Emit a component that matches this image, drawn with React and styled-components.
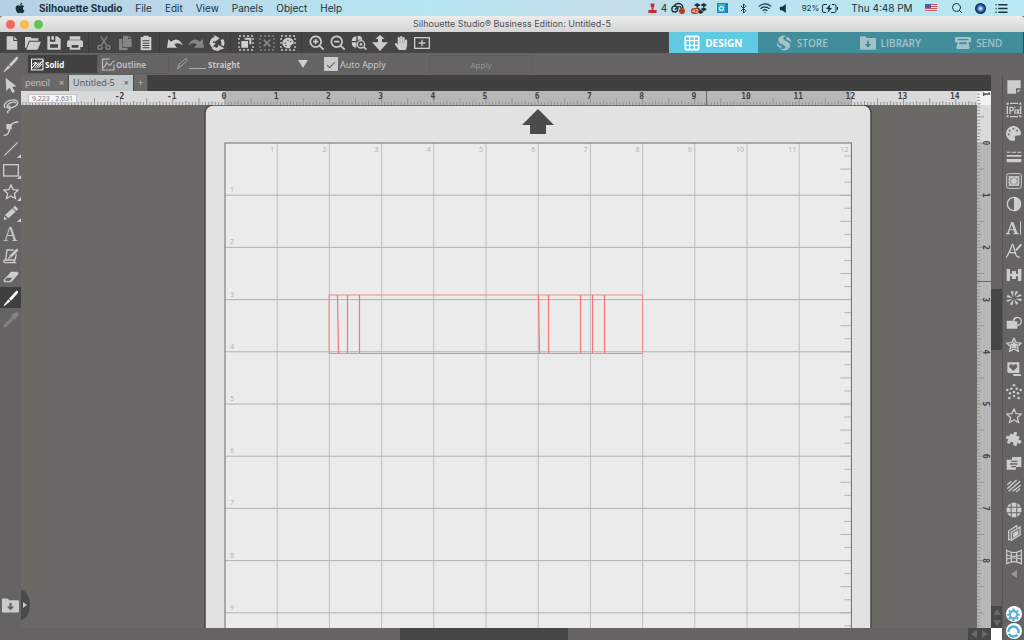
import React, { useState } from "react";
import styled, { createGlobalStyle, css } from "styled-components";
import { Bluetooth, Search, Wifi } from "lucide-react";
import { FaApple, FaDropbox, FaHandPaper, FaPalette } from "react-icons/fa";

const GlobalStyle = createGlobalStyle`
  *, *::before, *::after {
    box-sizing: border-box;
  }

  body {
    margin: 0;
    overflow: hidden;
    font-family: "Open Sans", "Noto Sans", sans-serif;
    font-size: 9px;
  }

  button, input, select {
    margin: 0;
    padding: 0;
    border: 0;
    border-radius: 0;
    background: none;
    color: inherit;
    font: inherit;
  }
`;

/* ---------- icons, all on a 24 x 24 box ---------- */

const STAR = "M12 1.5l3.200 6.900 7.600.8-5.700 5.100 1.600 7.500-6.700-3.800-6.700 3.800 1.600-7.500-5.700-5.100 7.600-.8z";
const MARQUEE = <rect x="1.5" y="1.5" width="21" height="21" fill="none" strokeWidth="2" strokeDasharray="3 3" />;
const ARROW_FOLDER = (
  <path
    stroke="none"
    fillRule="evenodd"
    d="M0 3.5Q0 2 1.500 2H8l2 2.500h12.500q1.500 0 1.500 1.500v14.500q0 1.500-1.500 1.500h-21Q0 22 0 20.500zM10.500 8.500v5H7l5 5.500 5-5.500h-3.500v-5z"
  />
);

const ICONS = {
  page: <path stroke="none" d="M4 2h10v7h6v13H4zM15.500 2l4.500 5.500h-4.500z" />,
  open: <path stroke="none" d="M0 3h8l2 2h10v3.500H6L2 19H0zM7 10h17l-5 12H2z" />,
  save: <path stroke="none" fillRule="evenodd" d="M2 2h4v8h8V2h3l5 4v16H2zM8 2h4v5H8zM6 14v5h12v-5z" />,
  print: <path stroke="none" fillRule="evenodd" d="M4 2h16v5H4zM3 8h18q3 0 3 3v7h-4v4H4v-4H0v-7q0-3 3-3zM7 15v4h10v-4z" />,
  cut: (
    <g fill="none" strokeWidth="2">
      <circle cx="6" cy="18.500" r="3" />
      <circle cx="18" cy="18.500" r="3" />
      <path d="M7.500 16L17 2M16.500 16L7 2" />
    </g>
  ),
  copy: <path stroke="none" fillRule="evenodd" d="M3 6h5v13h8v4H3zM9 1h8v5h5v12H9zM18 1l4 4h-4z" />,
  paste: (
    <path
      stroke="none"
      fillRule="evenodd"
      d="M4 3h4V1h8v2h4v20H4zM7 8v1.500h10V8zM7 11.500V13h10v-1.500zM7 15v1.500h10V15zM7 18.500V20h10v-1.500z"
    />
  ),
  undo: <path stroke="none" d="M0 19L2 6l4 4Q17 1 24 16q-7-6-13-2l4 5z" />,
  redo: <path stroke="none" d="M24 19L22 6l-4 4Q7 1 0 16q7-6 13-2l-4 5z" />,
  refresh: (
    <>
      <path fill="none" strokeWidth="4.500" d="M3.500 13a8.500 8.500 0 0 1 5-8M19 7a8.500 8.500 0 0 1 1 9M15 20.500a8.500 8.500 0 0 1-9-1.500" />
      <path stroke="none" d="M8 0l8 5-8 6zM12 24l2-9 9 5zM0 12h10l-5 8z" />
    </>
  ),
  selectAll: (
    <>
      {MARQUEE}
      <path stroke="none" d="M10 4h10v10h-3V7h-7zM5 9h10v10H5z" />
    </>
  ),
  deselect: (
    <>
      {MARQUEE}
      <path strokeWidth="2.500" d="M7 7l10 10M17 7L7 17" />
    </>
  ),
  selectColor: (
    <>
      {MARQUEE}
      <path stroke="none" fillRule="evenodd" d="M12 4c6 0 9 4 8.500 8-.5 3-3 2-4 3s0 5-4 5c-5 0-9-4-9-8s4-8 8.500-8zM7 11v2h2v-2zM11 7v2h2V7zM15 9v2h2V9zM8 15v2h2v-2z" />
    </>
  ),
  zoomIn: <path fill="none" strokeWidth="2.500" d="M10 2a8 8 0 1 0 .1 0zM16 16l6 6M10 6v8M6 10h8" />,
  zoomOut: <path fill="none" strokeWidth="2.500" d="M10 2a8 8 0 1 0 .1 0zM16 16l6 6M6 10h8" />,
  zoomSelection: (
    <>
      <path stroke="none" d="M1 9Q1 3 8 2v7zM10 1q7 0 7 6H10zM1 11h7v8Q1 19 1 11z" />
      <circle cx="15" cy="14" r="5.500" fill="none" strokeWidth="2" />
      <circle cx="15" cy="14" r="2" stroke="none" />
      <path strokeWidth="2.500" d="M19 18l4 4" />
    </>
  ),
  zoomDrag: <path stroke="none" d="M12 0l7 6h-4v5h9L12 24 0 11h9V6H5z" />,
  fit: (
    <g fill="none" strokeWidth="2">
      <rect x="1" y="4" width="22" height="16" />
      <path d="M12 7v10M7 12h10" />
    </g>
  ),
  design: (
    <g fill="none" strokeWidth="2.500">
      <rect x="2" y="2" width="20" height="20" rx="1" />
      <path d="M8.500 2v20M15.500 2v20M2 8.500h20M2 15.500h20" strokeWidth="2" />
    </g>
  ),
  store: (
    <path
      stroke="none"
      d="M4 4Q10-1 16 2q-6 1-5 4 1 2 6 4 6 3 4 8-2 4-7 5-6 1-10-3 6 2 9 0 3-3-2-5Q1 11 4 4zM18 3q5 3 5 9-2-4-7-5-3-2 2-4zM1 11q2 4 7 6 2 2-1 2-3 0-5-3-1-2-1-5z"
    />
  ),
  library: ARROW_FOLDER,
  send: (
    <path
      stroke="none"
      fillRule="evenodd"
      d="M2 3h20q2 0 2 2v5q0 1-2 1h-2l2 8q0 2-2 2H4q-2 0-2-2l2-8H2q-2 0-2-1V5q0-2 2-2zM4 6v2h16V6zM7 11l-1 3h12l-1-3z"
    />
  ),
  knife: <path stroke="none" d="M20 1q4 0 2 4L12 16l-3-3zM8 14l3 3-9 7-1-1z" />,
  pointer: <path stroke="none" d="M4 1l16 13-6 1 4 7-4 2-4-8-5 5z" />,
  lasso: (
    <g fill="none" strokeWidth="2">
      <path d="M3 15C-1 8 9 2 17 3s6 8-2 11c-5 2-10 1-9-1s6-1 5 3-7 3-3 7" />
      <path d="M6 12C8 7 14 5 20 7" />
    </g>
  ),
  node: (
    <>
      <path fill="none" strokeWidth="2" d="M1 23q9 0 9-13Q14 3 23 3" />
      <rect x="5" y="6" width="8" height="8" stroke="none" />
    </>
  ),
  line: <path strokeWidth="1.800" d="M2 22L22 2" />,
  rect: <rect x="1" y="4" width="22" height="17" fill="none" strokeWidth="2" />,
  star: <path fill="none" strokeWidth="2" d={STAR} />,
  pencil: <path stroke="none" d="M18 1l5 5-3 3-5-5zM14 5l5 5L8 20l-5-5zM2 17l4 4-5 2z" />,
  note: (
    <g fill="none" strokeWidth="2">
      <path d="M16 3H6L4 18h14l2-9M4 18q-3 0-3 2 0 2 3 2h14q-3-2 0-4" />
      <path strokeWidth="4" d="M11 13L22 2" />
      <path strokeWidth="2" d="M8 16l3-3" />
    </g>
  ),
  eraser: <path stroke="none" fillRule="evenodd" d="M12 4h9q3 1 2 4l-9 10q-2 2-4 2H3q-3-1-2-4zM3 16l1 2h6l4-5H6z" />,
  dropper: (
    <>
      <path fill="none" strokeWidth="2" d="M15 7L3 19l-1 3 3-1L17 9" />
      <path stroke="none" d="M17 2q4-3 6 0 1 2-1 4l-4 5-6-6z" />
    </>
  ),
  sketch: (
    <g fill="none" strokeWidth="2">
      <path d="M22 12v10H1V2h13" />
      <path d="M1 19q8-5 7-11l5 5q3 1 4-2 2-5 7-6" />
    </g>
  ),
  sketchFilled: (
    <g fill="none" strokeWidth="1.800">
      <rect x="1" y="2" width="21" height="20" />
      <path d="M3 17l8-9M6 19l9-11M10 19l9-12M3 12l4-4M14 18l6-7" />
      <path d="M1 19q8-5 7-11l5 5q3 1 4-2 2-5 7-6" />
    </g>
  ),
  penLine: <path fill="none" strokeWidth="1.500" d="M1 22l2-8L17 1q4 1 3 4L6 18zM3 14l4 4" />,
  sheet: <path stroke="none" d="M2 2h20v12h-7v8H2zM17 16h5l-5 5z" />,
  pix: (
    <>
      <path fill="none" strokeWidth="2" d="M6 2h12M6 22h12M2 6v12M22 6v12" />
      <path stroke="none" d="M1 1h3v3H1zM20 1h3v3h-3zM1 20h3v3H1zM20 20h3v3h-3z" />
      <path strokeWidth="2" fill="none" d="M6 18V8h2.500q2.500 0 2.500 2.500T8.500 13H6M13.500 11v7M13.500 7v2M16 11l4 7M20 11l-4 7" />
    </>
  ),
  lines: <path stroke="none" d="M1 4h6v1.800H1zM9 4h6v1.800H9zM17 4h6v1.800h-6zM1 9h22v2.500H1zM1 15h22v5H1z" />,
  trace: (
    <>
      <rect x="1" y="1" width="22" height="22" rx="3" fill="none" strokeWidth="1.500" />
      <path stroke="none" opacity=".6" d="M7 7h10v10H7z" />
      <path fill="none" strokeWidth="2.500" d="M5.500 6q2 1 3.500-.5 3 1 6 0 1.500 1.500 3.500.5-.500 2 .5 3.500-1 2.500 0 5-1 1.500-.5 3.500-2-.5-3.500.5-3-1-6 0-1.500-1-3.500-.5.500-2-.5-3.500 1-2.500 0-5 1-1.500.5-3.500z" />
      <circle cx="12" cy="12" r="4" stroke="none" />
    </>
  ),
  contrast: (
    <>
      <circle cx="12" cy="12" r="10" fill="none" strokeWidth="2" />
      <path stroke="none" d="M12 2a10 10 0 0 1 0 20z" />
    </>
  ),
  textStyle: (
    <path
      stroke="none"
      fillRule="evenodd"
      d="M8 3h3l6 16 2 1v1.500h-8V20l2-.5-1.500-4h-6l-1.300 4 2 .500v1.500H0V20l2-1zM8.600 7L6 13.800h5zM21 2h1.500v20H21z"
    />
  ),
  fontEdit: (
    <>
      <path fill="none" strokeWidth="2" d="M0 22Q5 16 9 3q1-3 2 1l4 14q2 4 6 3M4 13q5 3 10 1" />
      <path strokeWidth="3" d="M15 11L23 2" />
    </>
  ),
  align: <path stroke="none" d="M1 3h5v7h3V6h6v4h3V3h5v18h-5v-7h-3v4H9v-4H6v7H1z" />,
  pinwheel: (
    <path
      stroke="none"
      d="M11 11L7 3q1-2 4-1zM13 10l1-8q3-1 4 1zM14 11l7-5q2 1 2 3zM14 13l9 0q1 3-1 4zM12 14l6 5q0 3-3 3zM11 14l-1 8q-3 1-4-1zM10 13l-7 5q-2-1-2-3zM10 12L1 11q0-3 2-4z"
    />
  ),
  modify: <path stroke="none" d="M1 10h9a7 7 0 1 1 7 8v4H1zM12 11h5v5a5 5 0 0 0 0-10q-4 1-5 5z" fillRule="evenodd" />,
  offset: (
    <>
      <path fill="none" strokeWidth="2" strokeLinejoin="round" d={STAR} />
      <path stroke="none" d="M12 6l2 4.200 4.500.5-3.300 3 .9 4.500-4.100-2.300-4.100 2.300.9-4.500-3.300-3 4.500-.5z" />
    </>
  ),
  heartCopy: (
    <path
      stroke="none"
      fillRule="evenodd"
      d="M2 2h18v16H6q-5 0-4-4zM11 15l6-6q1-4-3-4-2 0-3 2-1-2-3-2-4 0-3 4zM10 19.500h10q3 0 3 3H13q-3 0-3-3z"
    />
  ),
  dots: (
    <g stroke="none">
      {[[12, 2], [8, 7], [16, 7], [2, 9], [22, 9], [12, 12], [6, 14], [18, 14], [5, 21], [12, 18], [19, 21]].map(([x, y]) => (
        <circle key={`${x}-${y}`} cx={x} cy={y} r="1.900" />
      ))}
    </g>
  ),
  puzzle: (
    <path
      stroke="none"
      transform="rotate(20 12 12)"
      d="M4 6h5q-2-5 2-5t2 5h6v5q5-2 5 2t-5 2v6h-6q2-4-2-4t-2 4H4v-6q-4 2-4-2t4-2z"
    />
  ),
  nesting: <path stroke="none" fillRule="evenodd" d="M9 3h14v15h-8v4H1V7h8zM8 8.500v2h9v-2zM6 12.500v2h11v-2zM8 16.500v2h7v-2z" />,
  hatch: <path fill="none" strokeWidth="2" d="M2 10l6-5M2 16L16 3M4 20L21 5M10 20l12-9M15 21l6-5" />,
  globe: (
    <path stroke="none" d="M7 2v5H2Q4 3 7 2zM8.500 1h7v6h-7zM17 2q3 1 5 5h-5zM1 8.500h6v7H1zM8.500 8.500h7v7h-7zM17 8.500h6v7h-6zM2 17h5v5Q4 21 2 17zM8.500 17h7v6h-7zM17 17h5q-2 4-5 5z" />
  ),
  shear: (
    <>
      <path strokeWidth="2" fill="none" d="M16 4V1L4 9v13h3" />
      <path strokeWidth="2" fill="none" d="M8 11l13-8v12L8 23z" />
      <path stroke="none" d="M10.500 12.500l8-5v7l-8 5z" />
    </>
  ),
  warp: (
    <g fill="none" strokeWidth="1.800">
      <path d="M1 2q11 7 22 0v20q-11-6-22 0z" />
      <path d="M1 9q11 4 22 0M1 15q11-3 22 0M8 4.500v15M16 4.500v15" />
    </g>
  ),
  gear: (
    <path
      stroke="none"
      fillRule="evenodd"
      d="M10 1h4l.5 3.200 2.500 1L19.500 3 22 5.500l-2 2.700 1 2.300 3 .5v3l-3 .5-1 2.500 2 2.500-2.500 2.500-2.700-2-2.300 1L14 24h-4l-.5-3-2.500-1-2.500 2L2 19.500l2-2.700-1-2.300-3-.5v-3l3-.5 1-2.500L2 5.500 4.500 3l2.700 2 2.300-1zM12 8a4.500 4.500 0 1 0 .1 0z"
    />
  ),
  ring: <path fill="none" strokeWidth="4" strokeDasharray="15 3" d="M12 4a8 8 0 1 1-.1 0z" />,
  stamp: <path stroke="none" d="M8 1h8v6l-2 3v5h7v7H3v-7h7v-5L8 7z" />,
  cloud: (
    <g fill="none" strokeWidth="2.500">
      <circle cx="7" cy="13" r="5.500" />
      <path d="M6 8q3-6 10-5 6 2 6 9M7 14l6-5q5-2 6 3" />
    </g>
  ),
  speaker: <path stroke="none" d="M4 8h5l8-6v20l-8-6H4z" />,
  list: <path strokeWidth="2.500" d="M1 5h2M6 5h17M1 12h2M6 12h17M1 19h2M6 19h17" />,
};

const Svg = styled.svg`
  display: block;
  flex: none;
  width: ${(props) => props.$size}px;
  height: ${(props) => props.$size}px;
  fill: currentColor;
  stroke: currentColor;
`;

function Icon({ name, size = 16 }) {
  return (
    <Svg $size={size} viewBox="0 0 24 24" aria-hidden="true">
      {ICONS[name]}
    </Svg>
  );
}

/* ---------- system menu bar ---------- */

const Desktop = styled.div`
  display: flex;
  flex-direction: column;
  height: 100vh;
  background: #656364;
`;

const MenuBar = styled.header`
  display: flex;
  flex: none;
  align-items: center;
  justify-content: space-between;
  height: 16px;
  padding: 0 12px 0 14px;
  background: linear-gradient(90deg, #b5d0e5 0%, #bad9ea 20%, #b4e7f1 42%, #c3dce8 60%, #b9e4f0 75%, #b6e9f1 100%);
  color: #16323e;
  font-family: Inter, sans-serif;
  font-size: 10px;
  line-height: 16px;
`;

const Menus = styled.nav`
  display: flex;
  align-items: center;
  gap: 13px;
`;

const MenuButton = styled.button`
  font-weight: ${(props) => (props.$bold ? 700 : 400)};
  white-space: nowrap;
`;

const StatusArea = styled.div`
  display: flex;
  align-items: center;
`;

const StatusItem = styled.div`
  position: relative;
  display: flex;
  align-items: center;
  justify-content: center;
  gap: 3px;
  width: ${(props) => props.$width}px;
  color: ${(props) => props.$color || "inherit"};
  white-space: nowrap;
`;

const Percent = styled.span`
  font-size: 8px;
`;

const Count = styled.span`
  color: #16323e;
`;

const Badge = styled.span`
  position: absolute;
  bottom: 1px;
  ${(props) => (props.children ? "left: 5px;" : "right: 1px;")}
  min-width: 6px;
  height: 6px;
  padding: 0 1px;
  border-radius: 3px;
  background: #c03a1c;
  color: white;
  font-size: 5px;
  line-height: 6px;
`;

const Siri = styled.span`
  width: 11px;
  height: 11px;
  border-radius: 50%;
  background: radial-gradient(circle, #b8f0ff 0 10%, #2e78c0 35%, #25235c 65%);
`;

const FinderBox = styled.span`
  display: flex;
  align-items: center;
  justify-content: center;
  width: 11px;
  height: 10px;
  border: solid #1d7fc4;
  border-width: 1px 3px 1px 1px;
  background: #42b6d6;

  &::after {
    content: "";
    width: 5px;
    height: 5px;
    border: 1px solid white;
    border-radius: 50%;
  }
`;

/* ---------- window chrome ---------- */

const TitleBar = styled.div`
  display: grid;
  grid-template-columns: 1fr auto 1fr;
  flex: none;
  align-items: center;
  height: 16px;
  padding: 0 6px;
  border-radius: 3px 3px 0 0;
  background: linear-gradient(#ececec, #d5d5d5);
  color: #505050;
  font-family: Inter, sans-serif;
  font-size: 9px;
`;

const Lights = styled.div`
  display: flex;
  gap: 5px;
`;

const Light = styled.button`
  width: 9px;
  height: 9px;
  border-radius: 50%;
  background: ${(props) => props.$color};
`;

const Title = styled.h1`
  margin: 0;
  font-size: 9px;
  font-weight: 400;
  line-height: 16px;
`;

const Toolbar = styled.div`
  display: flex;
  flex: none;
  justify-content: space-between;
  height: 21px;
  padding-right: 1px;
  background: #454545;
`;

const ToolbarGroups = styled.div`
  display: flex;
`;

const ToolbarGroup = styled.div`
  display: flex;
  padding: 0 3px 0 4px;
  border-right: 1px solid #3c3c3c;

  &:first-child {
    padding-left: 1px;
  }

  &:last-child {
    border: 0;
  }
`;

const ToolButton = styled.button`
  position: relative;
  display: flex;
  align-items: center;
  justify-content: center;
  width: 21px;
  height: 21px;
  color: #cdcdcd;

  &:disabled {
    color: #858585;
  }

  ${(props) =>
    props.$active &&
    css`
      background: #3f3f3f;
      color: white;
    `}

  ${(props) =>
    props.$flyout &&
    css`
      &::after {
        content: "";
        position: absolute;
        right: 0;
        bottom: 1px;
        border: 2px solid transparent;
        border-right-color: #d0d0d0;
        border-bottom-color: #d0d0d0;
      }
    `}
`;

const ModeTabs = styled.nav`
  display: flex;
  width: 354px;
`;

const ModeTab = styled.button`
  display: flex;
  flex: 1 1 0;
  align-items: center;
  justify-content: center;
  gap: 5px;
  background: ${(props) => (props.$active ? "#5fcae1" : "#418d9c")};
  color: ${(props) => (props.$active ? "white" : "#a3c3c9")};
  font-size: 10px;
  font-weight: ${(props) => (props.$active ? 700 : 600)};
`;

/* ---------- body ---------- */

const Body = styled.div`
  display: flex;
  flex: 1;
  min-height: 0;
`;

const Tools = styled.aside`
  display: flex;
  flex-direction: column;
  flex: none;
  width: 21px;
  background: #656364;
`;

const ToolGroup = styled.div`
  padding-bottom: 1px;
`;

const LibraryButton = styled.button`
  position: relative;
  display: flex;
  align-items: center;
  justify-content: center;
  width: 21px;
  height: 30px;
  margin: auto 0 20px;
  color: #cbcbcb;
`;

const Drawer = styled.span`
  position: absolute;
  top: 0;
  left: 21px;
  display: flex;
  align-items: center;
  width: 9px;
  height: 30px;
  padding-left: 2px;
  border-radius: 0 9px 9px 0 / 0 15px 15px 0;
  background: #4b4a4a;
  z-index: 1;

  &::before {
    content: "";
    border: solid transparent;
    border-width: 3px 0 3px 4px;
    border-left-color: #c4c4c4;
  }
`;

const Main = styled.main`
  display: flex;
  flex: 1;
  flex-direction: column;
  min-width: 0;
`;

const Options = styled.div`
  display: flex;
  flex: none;
  align-items: center;
  height: 22px;
  padding-left: 6px;
  background: #656364;
  color: #cfcfcf;
`;

const StyleButton = styled.button`
  display: flex;
  align-items: center;
  gap: 1px;
  width: 71px;
  height: 20px;
  padding-left: 3px;
  border: 1px solid #5f5d5e;
  background: ${(props) => (props.$active ? "#424141" : "transparent")};
  color: ${(props) => (props.$active ? "white" : "#bdbdbd")};
  font-size: 8px;
  font-weight: 700;
`;

const LineStyle = styled.label`
  display: flex;
  align-items: center;
  gap: 2px;
  width: 131px;
  margin: 0 16px 0 8px;
  color: #b8b8b8;
`;

const Rule = styled.span`
  width: 17px;
  height: 1px;
  margin-top: 8px;
  margin-left: -2px;
  background: #b0b0b0;
`;

const StyleSelect = styled.select`
  flex: 1;
  appearance: none;
  color: #c8c8c8;
  font-size: 8px;
  font-weight: 700;
`;

const Caret = styled.span`
  border: solid transparent;
  border-width: 8px 5px 0;
  border-top-color: #d0d0d0;
  pointer-events: none;
`;

const CheckLabel = styled.label`
  display: flex;
  align-items: center;
  gap: 2px;
  width: 105px;
`;

const Checkbox = styled.input`
  display: grid;
  place-items: center;
  appearance: none;
  width: 14px;
  height: 14px;
  background: #cacaca;

  &:checked::before {
    content: "";
    width: 8px;
    height: 4px;
    border: solid #555;
    border-width: 0 0 1px 1px;
    transform: rotate(-45deg);
  }
`;

const ApplyButton = styled.button`
  width: 104px;
  height: 18px;
  border: 1px solid #605e5f;
  color: #999;
  font-size: 8px;
`;

const WorkRow = styled.div`
  display: flex;
  flex: 1;
  min-height: 0;
`;

const Workspace = styled.div`
  display: grid;
  flex: 1;
  grid-template-columns: 1fr 14px;
  grid-template-rows: 16px 14px 1fr 12px;
  min-width: 0;
`;

const Tabs = styled.div`
  display: flex;
  grid-column: 1 / -1;
  background: #404040;
`;

const Tab = styled.div`
  display: flex;
  align-items: center;
  justify-content: space-between;
  gap: 9px;
  padding: 0 4px;
  border-right: 1px solid #4a4a4a;
  background: ${(props) => (props.$active ? "#c3c8ca" : "#6b6a68")};
  color: ${(props) => (props.$active ? "#4c5052" : "#c4c4c4")};
  line-height: 16px;
  white-space: nowrap;
`;

const RulerSvg = styled.svg`
  display: block;
  width: 100%;
  height: 100%;
  background: #dadada;
`;

const RulerBox = styled.div`
  position: relative;
  overflow: hidden;
  ${(props) => props.$vertical && "grid-area: 2 / 2 / 4 / 3;"}
`;

const Position = styled.output`
  position: absolute;
  top: 3px;
  left: 7px;
  width: 49px;
  height: 9px;
  border: 1px solid #c4c4c4;
  background: #f6f6f6;
  color: #777;
  font-size: 7px;
  line-height: 7px;
  text-align: center;
`;

const CanvasSvg = styled.svg`
  display: block;
  width: 100%;
  height: 100%;
  background: #6a6966;
`;

const CanvasBox = styled.div`
  min-height: 0;
  overflow: hidden;
`;

const HScroll = styled.div`
  display: grid;
  grid-template-columns: 379fr 168fr 400fr 11px 12px;
  grid-column: 1 / -1;
  background: #656364;
`;

const VScroll = styled.div`
  display: grid;
  flex: none;
  grid-template-rows: 214fr 61fr 256fr 11px 11px 12px;
  width: 11px;
  background: #656364;
`;

const Thumb = styled.div`
  background: #464646;
`;

const Corner = styled.div`
  background: white;
`;

const ROTATION = { up: 0, right: 90, down: 180, left: 270 };

const ScrollButton = styled.button`
  display: flex;
  align-items: center;
  justify-content: center;
  background: #484848;

  &::before {
    content: "";
    border: solid transparent;
    border-width: 0 4px 6px;
    border-bottom-color: #696969;
    transform: rotate(${(props) => ROTATION[props.$dir]}deg);
  }
`;

const Panels = styled.aside`
  display: flex;
  flex: none;
  flex-direction: column;
  align-items: center;
  width: 22px;
  border-left: 1px solid #565455;
  background: #656364;
`;

const PanelPair = styled.div`
  padding-bottom: 1px;
`;

const PanelButton = styled(ToolButton)`
  height: 23px;
`;

const Collapse = styled.button`
  width: 21px;
  height: 10px;
  margin-bottom: auto;

  &::before {
    content: "";
    display: block;
    width: 6px;
    margin: 0 auto;
    border: solid transparent;
    border-width: 4px 6px 4px 0;
    border-right-color: #989898;
  }
`;

const RoundButton = styled.button`
  display: flex;
  align-items: center;
  justify-content: center;
  width: 16px;
  height: 16px;
  margin-bottom: 1px;
  border-radius: 50%;
  background: white;
  color: ${(props) => props.$color};
`;

/* ---------- data ---------- */

const MENUS = ["File", "Edit", "View", "Panels", "Object", "Help"];

const TOOLBAR = [
  [["page", "New"], ["open", "Open"], ["save", "Save"], ["print", "Print"]],
  [["cut", "Cut", true], ["copy", "Copy", true], ["paste", "Paste"]],
  [["undo", "Undo"], ["redo", "Redo", true], ["refresh", "Refresh"]],
  [["selectAll", "Select all"], ["deselect", "Deselect", true], ["selectColor", "Select by colour"]],
  [["zoomIn", "Zoom in"], ["zoomOut", "Zoom out"], ["zoomSelection", "Zoom selection"], ["zoomDrag", "Drag zoom"], ["hand", "Pan"], ["fit", "Fit to page"]],
];

const MODES = ["Design", "Store", "Library", "Send"];

const TOOLS = [
  ["knife", "pointer", "lasso"],
  ["node", "line", "rect"],
  ["star", "pencil", "text"],
  ["note", "eraser", "knifeTool"],
  ["dropper"],
];

const FLYOUTS = ["line", "rect", "star", "pencil"];

const PANELS = [
  ["sheet", "pix"],
  ["palette", "lines"],
  ["trace", "contrast"],
  ["textStyle", "fontEdit"],
  ["align", "pinwheel"],
  ["modify", "offset"],
  ["heartCopy", "dots"],
  ["star", "puzzle"],
  ["nesting", "hatch"],
  ["globe", "shear"],
  ["warp"],
];

/* ---------- rulers and canvas ---------- */

const INCH = 52.2;
const MAT_X = 204; // left edge of the cutting area inside the canvas
const MAT_Y = 38;

const range = (from, to) => Array.from({ length: to - from + 1 }, (_, i) => from + i);

const tickLength = (i) => {
  if (i % 16 === 0) return 6;
  if (i % 8 === 0) return 7;
  return i % 4 === 0 ? 4 : 3;
};

function HorizontalRuler() {
  const x = (inch) => MAT_X + inch * INCH;
  return (
    <RulerBox>
      <RulerSvg>
        <rect x={x(0)} y="0" width={12 * INCH} height="14" fill="#b7b7b7" />
        <path
          d={range(-62, 300).map((i) => `M${x(i / 16)} 14v${-tickLength(i)}`).join("")}
          stroke="#929292"
          strokeWidth="1"
        />
        {range(-2, 14).map((n) => (
          <text
            key={n}
            x={x(n) - 1}
            y="8"
            textAnchor="middle"
            fontFamily="DejaVu Sans Mono, monospace"
            fontSize="8"
            fontWeight="700"
            fill="#3f3f3f"
          >
            {n}
          </text>
        ))}
        <path d="M685.500 0v14" stroke="#666" />
      </RulerSvg>
      <Position>9.223 , 2.631</Position>
    </RulerBox>
  );
}

function VerticalRuler() {
  const y = (inch) => 52 + inch * INCH;
  return (
    <RulerBox $vertical>
      <RulerSvg>
        <rect x="0" y="0" width="14" height="14" fill="#f2f2f2" />
        <rect x="0" y={y(0)} width="14" height="2000" fill="#b7b7b7" />
        <path
          d={range(-16, 300).map((i) => `M0 ${y(i / 16)}h${tickLength(i)}`).join("")}
          stroke="#929292"
          strokeWidth="1"
        />
        {range(-1, 8).map((n) => (
          <text
            key={n}
            transform={`translate(6 ${Math.max(y(n), 3)}) rotate(90)`}
            textAnchor="middle"
            fontFamily="DejaVu Sans Mono, monospace"
            fontSize="8"
            fontWeight="700"
            fill="#3f3f3f"
          >
            {Math.abs(n)}
          </text>
        ))}
        <path d="M0 190.500h14" stroke="#666" />
      </RulerSvg>
    </RulerBox>
  );
}

// vertical cuts inside the red strip, in canvas pixels: top x, bottom x
const CUTS = [
  [316, 317],
  [326, 326],
  [338, 338],
  [517, 518],
  [527, 527],
  [559, 559],
  [571, 571],
  [583, 583],
];

function Canvas() {
  const width = 12 * INCH;
  return (
    <CanvasBox>
      <CanvasSvg>
        <rect x="184" y="0" width="666" height="2000" rx="8" fill="#e2e2e2" stroke="#474746" strokeWidth="1.500" />
        <path d="M517 4l16 16h-8v9h-16v-9h-8z" fill="#4a4b4a" />
        <g transform={`translate(${MAT_X} ${MAT_Y})`}>
          <rect width={width} height="2000" fill="#ebebeb" />
          <path d={range(1, 11).map((n) => `M${n * INCH} 0v2000`).join("")} stroke="#bebebe" />
          <path d={range(1, 20).map((n) => `M0 ${n * INCH}h${width}`).join("")} stroke="#b2b2b2" />
          <path
            d={range(1, 80).map((n) => `M${width} ${(n * INCH) / 4}h${n % 2 ? -7 : -11}`).join("")}
            stroke="#b2b2b2"
          />
          <rect width={width} height="2000" fill="none" stroke="#6c6c6c" />
          <g fontFamily="Open Sans, sans-serif" fontSize="7" fill="#b0b0b0">
            {range(1, 12).map((n) => (
              <text key={n} x={n * INCH - 3} y="9" textAnchor="end">
                {n}
              </text>
            ))}
            {range(1, 9).map((n) => (
              <text key={n} x="5" y={n * INCH - 3}>
                {n}
              </text>
            ))}
          </g>
        </g>
        <rect x="308" y="190" width="313.500" height="58.500" fill="none" stroke="#f08a8a" />
        <path d={CUTS.map(([a, b]) => `M${a}.5 190L${b}.5 248`).join("")} stroke="#f57474" strokeWidth="1.200" />
      </CanvasSvg>
    </CanvasBox>
  );
}

const Letter = styled.span`
  font-family: "Liberation Serif", serif;
  font-size: 20px;
  line-height: 20px;
`;

function ToolGlyph({ name, size = 16 }) {
  if (name === "text") return <Letter>A</Letter>;
  if (name === "hand") return <FaHandPaper size={14} />;
  if (name === "palette") return <FaPalette size={15} />;
  return <Icon name={name === "knifeTool" ? "knife" : name} size={size} />;
}

function SystemStatus() {
  return (
    <StatusArea>
      <StatusItem $width={24} $color="#c22f2b">
        <Icon name="stamp" size={11} />
        <Count>4</Count>
      </StatusItem>
      <StatusItem $width={17}>
        <Icon name="cloud" size={13} />
        <Badge />
      </StatusItem>
      <StatusItem $width={28}>
        <FaDropbox size={13} />
        <Badge>42</Badge>
      </StatusItem>
      <StatusItem $width={16}>
        <FinderBox />
      </StatusItem>
      <StatusItem $width={27}>
        <Bluetooth size={11} />
      </StatusItem>
      <StatusItem $width={15}>
        <Wifi size={14} />
      </StatusItem>
      <StatusItem $width={22}>
        <Icon name="speaker" size={11} />
      </StatusItem>
      <StatusItem $width={52}>
        <Percent>92%</Percent>
        <svg width="16" height="9" viewBox="0 0 16 9" fill="none" stroke="currentColor">
          <path d="M5 .5H2Q.5.5.5 2v5Q.5 8.500 2 8.500h2M10 .5h2.500Q14 .5 14 2v5q0 1.500-1.500 1.500H9M15.500 3v3" />
          <path d="M8.500 0L4 5h2.500L5.500 9 10 4H7.500z" fill="currentColor" stroke="none" />
        </svg>
      </StatusItem>
      <StatusItem $width={72}>Thu 4:48 PM</StatusItem>
      <StatusItem $width={25}>
        <svg width="12" height="8" viewBox="0 0 12 8">
          <path fill="#f1dfe2" d="M0 0h12v8H0z" />
          <path stroke="#cf5661" d="M0 .5h12M0 2.500h12M0 4.500h12M0 6.500h12" />
          <path fill="#4e5f96" d="M0 0h6v4H0z" />
        </svg>
      </StatusItem>
      <StatusItem $width={28}>
        <Search size={12} />
      </StatusItem>
      <StatusItem $width={19}>
        <Siri />
      </StatusItem>
      <StatusItem $width={22}>
        <Icon name="list" size={13} />
      </StatusItem>
    </StatusArea>
  );
}

export default function App() {
  const [mode, setMode] = useState("Design");
  const [style, setStyle] = useState("Solid");
  const [tool, setTool] = useState("knifeTool");
  const [autoApply, setAutoApply] = useState(true);

  return (
    <Desktop>
      <GlobalStyle />
      <MenuBar>
        <Menus>
          <FaApple size={12} />
          <MenuButton $bold>Silhouette Studio</MenuButton>
          {MENUS.map((menu) => (
            <MenuButton key={menu}>{menu}</MenuButton>
          ))}
        </Menus>
        <SystemStatus />
      </MenuBar>

      <TitleBar>
        <Lights>
          <Light $color="#ee6a5f" aria-label="Close" />
          <Light $color="#f5bd4f" aria-label="Minimise" />
          <Light $color="#61c454" aria-label="Zoom" />
        </Lights>
        <Title>Silhouette Studio® Business Edition: Untitled-5</Title>
      </TitleBar>

      <Toolbar>
        <ToolbarGroups>
          {TOOLBAR.map((group) => (
            <ToolbarGroup key={group[0][0]}>
              {group.map(([name, label, disabled]) => (
                <ToolButton key={name} aria-label={label} disabled={disabled}>
                  <ToolGlyph name={name} />
                </ToolButton>
              ))}
            </ToolbarGroup>
          ))}
        </ToolbarGroups>
        <ModeTabs>
          {MODES.map((name) => (
            <ModeTab key={name} $active={mode === name} onClick={() => setMode(name)}>
              <Icon name={name.toLowerCase()} />
              {name.toUpperCase()}
            </ModeTab>
          ))}
        </ModeTabs>
      </Toolbar>

      <Body>
        <Tools>
          {TOOLS.map((group) => (
            <ToolGroup key={group[0]}>
              {group.map((name) => (
                <ToolButton
                  key={name}
                  aria-label={name}
                  disabled={name === "dropper"}
                  $active={tool === name}
                  $flyout={FLYOUTS.includes(name)}
                  onClick={() => setTool(name)}
                >
                  <ToolGlyph name={name} />
                </ToolButton>
              ))}
            </ToolGroup>
          ))}
          <LibraryButton aria-label="Show library">
            <Icon name="library" size={17} />
            <Drawer />
          </LibraryButton>
        </Tools>

        <Main>
          <Options>
            <StyleButton $active={style === "Solid"} onClick={() => setStyle("Solid")}>
              <Icon name="sketchFilled" size={13} />
              Solid
            </StyleButton>
            <StyleButton $active={style === "Outline"} onClick={() => setStyle("Outline")}>
              <Icon name="sketch" size={13} />
              Outline
            </StyleButton>
            <LineStyle>
              <Icon name="penLine" size={12} />
              <Rule />
              <StyleSelect aria-label="Line style">
                <option>Straight</option>
                <option>Freehand</option>
              </StyleSelect>
              <Caret />
            </LineStyle>
            <CheckLabel>
              <Checkbox type="checkbox" checked={autoApply} onChange={(e) => setAutoApply(e.target.checked)} />
              Auto Apply
            </CheckLabel>
            <ApplyButton>Apply</ApplyButton>
          </Options>

          <WorkRow>
            <Workspace>
              <Tabs>
                <Tab>
                  pencil <button aria-label="Close pencil">×</button>
                </Tab>
                <Tab $active>
                  Untitled-5 <button aria-label="Close Untitled-5">×</button>
                </Tab>
                <Tab as="button" aria-label="New tab">
                  +
                </Tab>
              </Tabs>
              <HorizontalRuler />
              <VerticalRuler />
              <Canvas />
              <HScroll>
                <span />
                <Thumb />
                <span />
                <ScrollButton $dir="left" aria-label="Scroll left" />
                <ScrollButton $dir="right" aria-label="Scroll right" />
              </HScroll>
            </Workspace>
            <VScroll>
              <span />
              <Thumb />
              <span />
              <ScrollButton $dir="up" aria-label="Scroll up" />
              <ScrollButton $dir="down" aria-label="Scroll down" />
              <Corner />
            </VScroll>
            <Panels>
              {PANELS.map((pair) => (
                <PanelPair key={pair[0]}>
                  {pair.map((name) => (
                    <PanelButton key={name} aria-label={name}>
                      <ToolGlyph name={name} />
                    </PanelButton>
                  ))}
                </PanelPair>
              ))}
              <Collapse aria-label="Collapse panels" />
              <RoundButton $color="#62b2dd" aria-label="Preferences">
                <Icon name="gear" size={13} />
              </RoundButton>
              <RoundButton $color="#4ab4cf" aria-label="Sync">
                <Icon name="ring" size={15} />
              </RoundButton>
            </Panels>
          </WorkRow>
        </Main>
      </Body>
    </Desktop>
  );
}
